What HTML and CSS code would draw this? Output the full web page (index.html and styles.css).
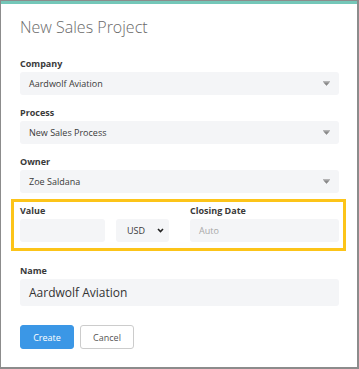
FILE: index.html
```html
<!DOCTYPE html>
<html>
<head>
<meta charset="utf-8">
<link rel="stylesheet" href="styles.css">
</head>
<body>
<div class="frame">
  <div class="modal">
    <h1 class="title">New Sales Project</h1>

    <div class="field">
      <div class="label">Company</div>
      <div class="select"><span>Aardwolf Aviation</span>
        <svg class="caret" width="7" height="5" viewBox="0 0 7 5"><path d="M0 0.5h7M0.8 1.5h5.4L3.5 4.5z" fill="#8a8a8a" stroke="#8a8a8a" stroke-width="0.6"/></svg>
      </div>
    </div>

    <div class="field">
      <div class="label">Process</div>
      <div class="select"><span>New Sales Process</span>
        <svg class="caret" width="7" height="5" viewBox="0 0 7 5"><path d="M0 0.5h7M0.8 1.5h5.4L3.5 4.5z" fill="#8a8a8a" stroke="#8a8a8a" stroke-width="0.6"/></svg>
      </div>
    </div>

    <div class="field">
      <div class="label">Owner</div>
      <div class="select"><span>Zoe Saldana</span>
        <svg class="caret" width="7" height="5" viewBox="0 0 7 5"><path d="M0 0.5h7M0.8 1.5h5.4L3.5 4.5z" fill="#8a8a8a" stroke="#8a8a8a" stroke-width="0.6"/></svg>
      </div>
    </div>

    <div class="highlight">
      <div class="col col-value">
        <div class="label">Value</div>
        <div class="input"></div>
      </div>
      <div class="col col-currency">
        <div class="label">&nbsp;</div>
        <div class="input currency"><span>USD</span>
          <svg class="chev" width="7" height="5" viewBox="0 0 7 5"><path d="M1 1l2.5 2.5L6 1" fill="none" stroke="#222" stroke-width="1.6"/></svg>
        </div>
      </div>
      <div class="col col-date">
        <div class="label">Closing Date</div>
        <div class="input"><span class="placeholder">Auto</span></div>
      </div>
    </div>

    <div class="field name-field">
      <div class="label">Name</div>
      <div class="input big"><span>Aardwolf Aviation</span></div>
    </div>

    <div class="actions">
      <button class="btn primary">Create</button>
      <button class="btn secondary">Cancel</button>
    </div>
  </div>
</div>
</body>
</html>
```

FILE: styles.css
```css
* { box-sizing: border-box; }
html, body { margin: 0; padding: 0; }
body {
  font-family: "Open Sans", "Liberation Sans", sans-serif;
  background: #ffffff;
}
.frame {
  height: 369px;
  width: 359px;
  background: #8c8c8c;
  padding: 1px 2px 2px 1px;
  display: flex;
  flex-direction: column;
}
.modal {
  flex: 1;
  background: #ffffff;
  border-top: 3px solid #74c7b8;
  padding: 12px 18px 18px 19px;
}
.title {
  margin: 0 0 20px 0;
  font-size: 16px;
  line-height: 22px;
  font-weight: 300;
  color: #6a6a6a;
}
.field { margin-bottom: 12px; }
.label {
  font-size: 9px;
  line-height: 12px;
  font-weight: 700;
  color: #3a3a3a;
  margin-bottom: 2px;
}
.select, .input {
  height: 23px;
  background: #f4f5f7;
  border-radius: 3px;
  display: flex;
  align-items: center;
  padding: 0 9px;
  font-size: 9px;
  color: #3a3a3a;
}
.select { justify-content: space-between; }
.caret { margin-right: 0; }
.highlight {
  margin: -6px -7px 0 -9px;
  border: 3px solid #fcc419;
  padding: 3px 4px 6px 6px;
  display: flex;
}
.col-value { width: 85px; }
.col-currency { width: 53px; margin-left: 11px; }
.col-date { flex: 1; margin-left: 21px; }
.currency {
  justify-content: space-between;
  padding: 0 5px 0 11px;
}
.placeholder { color: #a8a8a8; }
.name-field { margin-top: 14px; margin-bottom: 19px; }
.input.big {
  height: 27px;
  font-size: 12px;
  color: #333;
}
.actions { display: flex; gap: 6px; }
.btn {
  height: 24px;
  width: 54px;
  border-radius: 3px;
  font-family: "Open Sans", "Liberation Sans", sans-serif;
  font-size: 9px;
  padding: 0;
  cursor: pointer;
}
.primary {
  background: #3b97e6;
  color: #ffffff;
  border: 1px solid #3b97e6;
}
.secondary {
  background: #ffffff;
  color: #555555;
  border: 1px solid #cccccc;
}
```
